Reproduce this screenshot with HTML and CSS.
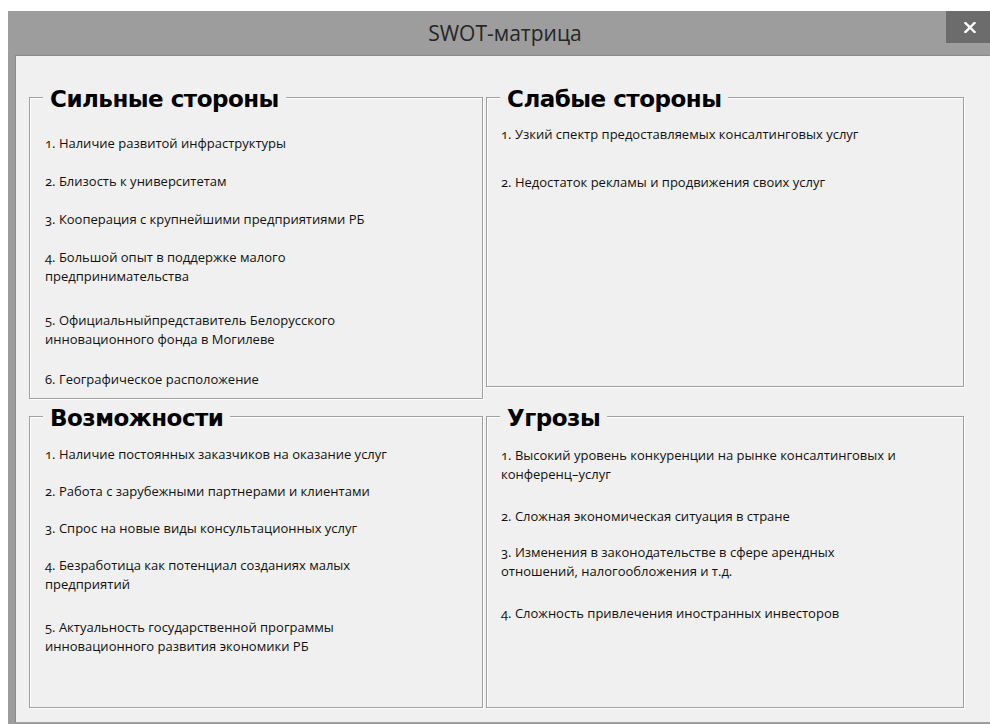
FILE: index.html
```html
<!DOCTYPE html>
<html lang="ru">
<head>
<meta charset="utf-8">
<title>SWOT-матрица</title>
<link rel="stylesheet" href="styles.css">
</head>
<body>
<div class="window">
  <header class="titlebar">
    <span class="title">SWOT-матрица</span>
    <button class="close" type="button" aria-label="Закрыть">
      <svg width="12" height="11" viewBox="0 0 12 11" aria-hidden="true">
        <path d="M1.5 1 L10.5 10 M10.5 1 L1.5 10" stroke="#fff" stroke-width="2.4" stroke-linecap="square" fill="none"/>
      </svg>
    </button>
  </header>

  <main class="client">
    <div class="matrix">
      <section class="group group--tall">
        <h2 class="group-title">Сильные стороны</h2>
        <ol class="items items--strengths">
          <li>1. Наличие развитой инфраструктуры</li>
          <li>2. Близость к университетам</li>
          <li>3. Кооперация с крупнейшими предприятиями РБ</li>
          <li class="two-line">4. Большой опыт в поддержке малого<br>предпринимательства</li>
          <li class="two-line tight">5. Официальныйпредставитель Белорусского<br>инновационного фонда в Могилеве</li>
          <li>6. Географическое расположение</li>
        </ol>
      </section>

      <section class="group group--short">
        <h2 class="group-title">Слабые стороны</h2>
        <ol class="items items--weaknesses">
          <li>1. Узкий спектр предоставляемых консалтинговых услуг</li>
          <li>2. Недостаток рекламы и продвижения своих услуг</li>
        </ol>
      </section>

      <section class="group group--bottom">
        <h2 class="group-title">Возможности</h2>
        <ol class="items items--opportunities">
          <li>1. Наличие постоянных заказчиков на оказание услуг</li>
          <li>2. Работа с зарубежными партнерами и клиентами</li>
          <li>3. Спрос на новые виды консультационных услуг</li>
          <li class="two-line">4. Безработица как потенциал созданиях малых<br>предприятий</li>
          <li class="two-line">5. Актуальность государственной программы<br>инновационного развития экономики РБ</li>
        </ol>
      </section>

      <section class="group group--bottom">
        <h2 class="group-title">Угрозы</h2>
        <ol class="items items--threats">
          <li class="two-line">1. Высокий уровень конкуренции на рынке консалтинговых и<br>конференц–услуг</li>
          <li>2. Сложная экономическая ситуация в стране</li>
          <li class="two-line">3. Изменения в законодательстве в сфере арендных<br>отношений, налогообложения и т.д.</li>
          <li>4. Сложность привлечения иностранных инвесторов</li>
        </ol>
      </section>
    </div>
  </main>
</div>
</body>
</html>
```

FILE: styles.css
```css
html, body {
  margin: 0;
  padding: 0;
  overflow: hidden;
  background: #ffffff;
}

body {
  width: 990px;
  height: 724px;
}

/* Dialog window with a flat gray frame */
.window {
  margin: 11px 0 0 8px;
  width: 994px;
  background: #9d9d9d;
  padding: 0 0 8px 7px;
  box-sizing: border-box;
}

.titlebar {
  height: 44px;
  display: grid;
  grid-template-columns: 1fr auto 1fr;
  align-items: start;
}

.title {
  grid-column: 2;
  align-self: center;
  font-family: "Open Sans", "DejaVu Sans", sans-serif;
  font-size: 21px;
  color: #262626;
  line-height: 26px;
  margin-left: -7px;
}

.close {
  grid-column: 3;
  justify-self: end;
  width: 46px;
  height: 32px;
  margin-right: 10px;
  border: 0;
  padding: 0;
  background: #6c6c6c;
  display: flex;
  align-items: center;
  justify-content: center;
}

.close svg {
  display: block;
  margin-left: 2px;
}

/* Client area of the dialog */
.client {
  display: block;
  box-sizing: border-box;
  height: 667px;
  background: #f0f0f0;
  border-top: 1px solid #8a8a8a;
  border-left: 1px solid #8a8a8a;
  padding: 41px 0 0 13px;
}

.matrix {
  display: grid;
  grid-template-columns: 454px 478px;
  column-gap: 3px;
  row-gap: 17px;
  align-items: start;
}

/* Etched group box */
.group {
  box-sizing: border-box;
  border: 1px solid #a0a0a0;
  box-shadow: 1px 1px 0 #ffffff, inset 1px 1px 0 #ffffff;
}

.group--tall { height: 302px; }
.group--short { height: 290px; }
.group--bottom { height: 292px; }

.group-title {
  width: fit-content;
  margin: -12px 0 0 13px;
  padding: 0 7px;
  background: #f0f0f0;
  font-family: "DejaVu Sans", sans-serif;
  font-weight: bold;
  font-size: 23px;
  letter-spacing: -0.5px;
  line-height: 26px;
  color: #000;
}

.items {
  list-style: none;
  margin: 0;
  padding: 0 10px 0 15px;
  display: flex;
  flex-direction: column;
  gap: 18px;
  font-family: "Open Sans", "DejaVu Sans", sans-serif;
  font-size: 13px;
  line-height: 19px;
  color: #111111;
  font-variant-numeric: oldstyle-nums;
}

.items li {
  white-space: nowrap;
}

.items li.two-line {
  margin-bottom: 6px;
}

.items li.tight {
  margin-bottom: 2px;
}

.items--strengths {
  padding-top: 22px;
  gap: 19px;
}

.items--weaknesses {
  padding-top: 13px;
  padding-left: 14px;
  gap: 29px;
}

.items--opportunities {
  padding-top: 14px;
}

.items--threats {
  padding-top: 15px;
  padding-left: 14px;
  gap: 17px;
}
```
